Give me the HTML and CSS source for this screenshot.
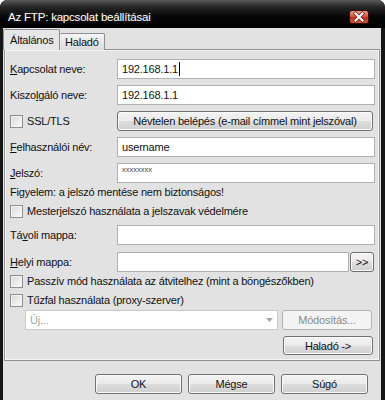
FILE: index.html
```html
<!doctype html>
<html>
<head>
<meta charset="utf-8">
<title>Az FTP: kapcsolat beállításai</title>
<link rel="stylesheet" href="styles.css">
</head>
<body>
<div class="window">
	<div class="titlebar">
		<span class="title">Az FTP: kapcsolat beállításai</span>
		<span class="close">
			<svg width="20" height="14" viewBox="0 0 20 14">
				<path d="M6.5 3.5 L13.5 10.5 M13.5 3.5 L6.5 10.5" stroke="#6a2214" stroke-width="3.4" stroke-linecap="square"/>
				<path d="M6.5 3.5 L13.5 10.5 M13.5 3.5 L6.5 10.5" stroke="#fff" stroke-width="2" stroke-linecap="square"/>
			</svg>
		</span>
	</div>
	<div class="client">
		<div class="tabs">
			<span class="tab active">Általános</span>
			<span class="tab">Haladó</span>
		</div>
		<div class="panel">
			<div class="row">
				<span class="label"><u>K</u>apcsolat neve:</span>
				<div class="field">192.168.1.1<span class="caret"></span></div>
			</div>
			<div class="row">
				<span class="label">Kiszo<u>l</u>gáló neve:</span>
				<div class="field">192.168.1.1</div>
			</div>
			<div class="row">
				<span class="label check-label"><span class="check"></span>SSL/TLS</span>
				<button class="btn wide">Névtelen belépés (e-mail címmel mint jelszóval)</button>
			</div>
			<div class="row">
				<span class="label"><u>F</u>elhasználói név:</span>
				<div class="field">username</div>
			</div>
			<div class="row pass-row">
				<span class="label"><u>J</u>elszó:</span>
				<div class="field pass">xxxxxxxx</div>
			</div>
			<div class="note">Figyelem: a jelszó mentése nem biztonságos!</div>
			<div class="line master"><span class="check"></span>Mesterjelszó használata a jelszavak védelmére</div>
			<div class="row remote">
				<span class="label">Tá<u>v</u>oli mappa:</span>
				<div class="field"></div>
			</div>
			<div class="row local">
				<span class="label"><u>H</u>elyi mappa:</span>
				<div class="field"></div>
				<button class="btn browse">&gt;&gt;</button>
			</div>
			<div class="line passive"><span class="check"></span>Passzív mód használata az átvitelhez (mint a böngészőkben)</div>
			<div class="line firewall"><span class="check"></span>Tűzfal használata (proxy-szerver)</div>
			<div class="row proxy">
				<div class="combo">
					<span>Új...</span>
					<svg width="7" height="4" viewBox="0 0 7 4"><path d="M0 0 H7 L3.5 4 Z" fill="#a9a9a9"/></svg>
				</div>
				<button class="btn side disabled">Módosítás...</button>
			</div>
			<div class="row advanced">
				<button class="btn side">Haladó -&gt;</button>
			</div>
		</div>
		<div class="footer">
			<button class="btn">OK</button>
			<button class="btn">Mégse</button>
			<button class="btn">Súgó</button>
		</div>
	</div>
</div>
</body>
</html>
```

FILE: styles.css
```css
body{margin:0;background:#fff;font:11px "Liberation Sans",Arial,sans-serif;letter-spacing:-0.2px;color:#111;}
.window{width:385px;height:400px;overflow:hidden;display:flex;flex-direction:column;background:#161616;border-radius:7px 7px 0 0;}
.titlebar{height:23px;padding:5px 16px 0 8px;display:flex;align-items:center;background:linear-gradient(#5a5a5a 0,#262626 25%,#060606 60%,#000 100%);border-radius:7px 7px 0 0;}
.title{flex:1;color:#fff;font:11.5px "Liberation Sans",sans-serif;letter-spacing:-0.2px;text-shadow:0 0 4px rgba(255,255,255,0.25);}
.close{width:20px;height:14px;box-sizing:border-box;border:1px solid #3b0d06;border-radius:3px;background:linear-gradient(#e9a08f 0,#d2553c 45%,#b8321c 55%,#cf5a3f 100%);display:flex;}
.close svg{margin:-1px;}
.client{flex:1;margin:0 4px 0 3px;padding-top:2px;background:#e2e2e2;}
.tabs{display:flex;align-items:flex-end;height:20px;position:relative;z-index:1;margin-bottom:-1px;}
.tab{height:16px;line-height:17px;padding:0 5px;border:1px solid #8e9096;border-bottom:none;border-left:none;border-radius:2px 2px 0 0;background:linear-gradient(#f4f4f4,#dcdcdc);}
.tab.active{height:20px;line-height:20px;padding:0 5px 0 6px;border-left:1px solid #8e9096;background:#e6e6e6;width:44px;}
.panel{height:301px;margin:0 1px;padding:9px 4px 0 5px;border:1px solid #8e9096;box-shadow:inset 1px 1px #f6f6f6,inset -1px -1px #f6f6f6;background:#e2e2e2;}
.row{display:flex;align-items:center;height:20px;margin-bottom:6px;}
.label{width:107px;flex:none;white-space:nowrap;}
.check-label{display:flex;align-items:center;}
.field{flex:1;height:20px;box-sizing:border-box;border:1px solid #aeb0b6;background:#fff;padding-left:4px;line-height:18px;white-space:nowrap;}
.caret{display:inline-block;width:1px;height:14px;background:#000;vertical-align:-3px;margin-left:1px;}
.pass-row{margin-top:2px;margin-bottom:1px;}
.field.pass{font-size:7.5px;line-height:9px;padding-top:1px;letter-spacing:0;color:#444;}
.note{height:16px;line-height:16px;}
.line{display:flex;align-items:center;height:16px;white-space:nowrap;}
.check{width:13px;height:13px;flex:none;box-sizing:border-box;border:1px solid #8f8f8f;background:linear-gradient(135deg,#d9d9d9,#fbfbfb);box-shadow:inset 0 0 0 1px #f3f3f3;margin-right:4px;}
.master{height:18px;margin:2px 0 0;}
.remote{margin-top:5px;margin-bottom:7px;}
.local{margin-bottom:1px;}
.local .field{flex:none;width:232px;}
.btn{height:20px;box-sizing:border-box;padding:0;border:1px solid #707070;border-radius:3px;background:linear-gradient(#f3f3f3 0,#ebebeb 48%,#dddddd 52%,#cfcfcf 100%);box-shadow:inset 0 0 0 1px #fbfbfb;font:11px "Liberation Sans",Arial,sans-serif;letter-spacing:-0.2px;color:#111;}
.btn.wide{flex:1;margin-right:2px;}
.btn.browse{width:24px;margin-left:1px;margin-right:1px;}
.firewall{margin-top:3px;}
.proxy{margin-top:2px;padding-left:15px;}
.combo{width:253px;height:20px;box-sizing:border-box;border:1px solid #c9c9c9;background:#fff;display:flex;align-items:center;justify-content:space-between;padding:0 4px;color:#a4a4a4;}
.btn.side{width:90px;margin-left:4px;margin-right:2px;}
.btn.disabled{border-color:#b3b3b3;background:#f4f4f4;box-shadow:none;color:#8a8a8a;}
.advanced{justify-content:flex-end;height:19px;}
.advanced .btn{height:19px;}
.footer{display:flex;justify-content:flex-end;gap:6px;padding:13px 13px 0 0;}
.footer .btn{width:87px;}
```
